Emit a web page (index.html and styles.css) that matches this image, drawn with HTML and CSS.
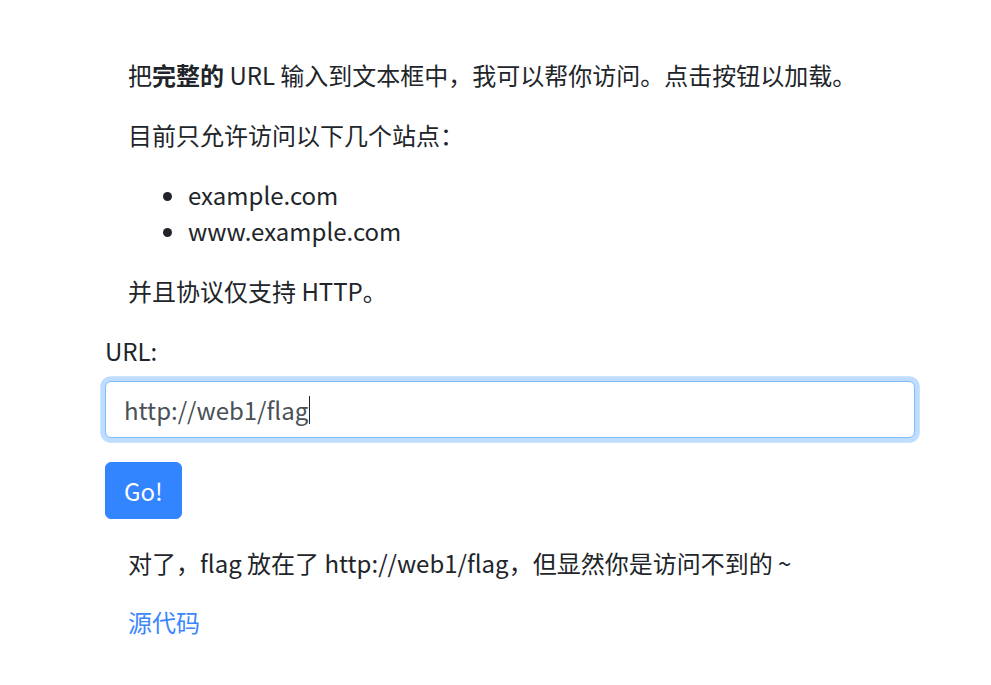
FILE: index.html
```html
<!DOCTYPE html>
<html lang="zh-CN">
<head>
<meta charset="utf-8">
<title>URL</title>
<link rel="stylesheet" href="styles.css">
</head>
<body>
<div class="container">
  <div class="intro">
    <p>把<strong>完整的</strong> URL 输入到文本框中，我可以帮你访问。点击按钮以加载。</p>
    <p>目前只允许访问以下几个站点：</p>
    <ul>
      <li>example.com</li>
      <li>www.example.com</li>
    </ul>
    <p>并且协议仅支持 HTTP。</p>
  </div>
  <form class="form">
    <div class="form-group">
      <label class="label" for="url">URL:</label>
      <div class="form-control"><span class="value">http://web1/flag</span><span class="caret"></span></div>
    </div>
    <button type="button" class="btn">Go!</button>
  </form>
  <div class="outro">
    <p>对了，flag 放在了 http://web1/flag，但显然你是访问不到的 ~</p>
    <p><a class="link" href="#">源代码</a></p>
  </div>
</div>
</body>
</html>
```
FILE: styles.css
```css
html, body {
  margin: 0;
  padding: 0;
  background: #ffffff;
}
body {
  font-family: "Noto Sans CJK SC", "Noto Sans", sans-serif;
  font-size: 24px;
  line-height: 36px;
  color: #212529;
}
.container {
  width: 810px;
  margin-left: 105px;
  padding-top: 57px;
}
.intro, .outro {
  padding-left: 23px;
}
p {
  margin: 0 0 24px 0;
}
.outro p {
  margin-bottom: 23px;
}
strong {
  font-weight: 700;
}
ul {
  margin: 0 0 24px 0;
  padding-left: 60px;
}
.form-group {
  display: flex;
  flex-direction: column;
  margin-bottom: 24px;
}
.label {
  margin-bottom: 12px;
}
.form-control {
  box-sizing: border-box;
  height: 57px;
  width: 810px;
  display: flex;
  align-items: center;
  padding: 0 18px;
  border: 1.5px solid #80bdff;
  border-radius: 6px;
  box-shadow: 0 0 0 4.8px rgba(0, 123, 255, 0.25);
  color: #495057;
  background: #fff;
}
.caret {
  display: inline-block;
  width: 1px;
  height: 28px;
  background: #212529;
  margin-left: 1px;
}
.btn {
  box-sizing: border-box;
  display: block;
  height: 57px;
  padding: 0 18px;
  border: 1.5px solid #3384ff;
  border-radius: 6px;
  background: #3384ff;
  color: #ffffff;
  font-family: inherit;
  font-size: 24px;
  line-height: 36px;
  margin-bottom: 26px;
}
.link {
  color: #3b86ff;
  text-decoration: none;
}
```
